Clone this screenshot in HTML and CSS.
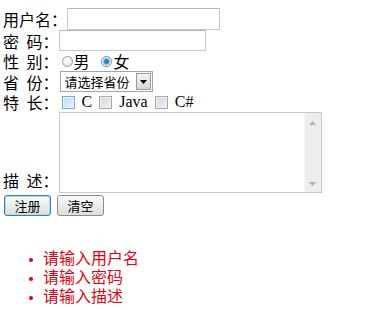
FILE: index.html
```html
<!DOCTYPE html>
<html>
<head>
<meta charset="utf-8">
<link rel="stylesheet" href="styles.css">
</head>
<body>
<form class="form">
  <div class="row r1"><span class="lbl">用户名：</span><input class="txt t1" type="text"></div>
  <div class="row r2"><span class="lbl">密 码：</span><input class="txt t2" type="password"></div>
  <div class="row r3"><span class="lbl">性 别：</span>
    <span class="radio"></span><span class="opt">男</span>
    <span class="radio on"></span><span class="opt">女</span>
  </div>
  <div class="row r4"><span class="lbl">省 份：</span>
    <div class="sel"><span class="sel-text">请选择省份</span><span class="sel-btn"><svg width="7" height="4" viewBox="0 0 7 4"><path d="M0 0H7L3.5 4Z" fill="#000"/></svg></span></div>
  </div>
  <div class="row r5"><span class="lbl">特 长：</span>
    <span class="cb hot"></span><span class="copt">C</span>
    <span class="cb"></span><span class="copt">Java</span>
    <span class="cb"></span><span class="copt">C#</span>
  </div>
  <div class="row r6"><span class="lbl lbl-area">描 述：</span>
    <div class="area"><textarea class="ta"></textarea>
      <div class="sb"><svg width="7" height="4" viewBox="0 0 7 4"><path d="M0 4H7L3.5 0Z" fill="#b0b0b0"/></svg><svg width="7" height="4" viewBox="0 0 7 4"><path d="M0 0H7L3.5 4Z" fill="#b0b0b0"/></svg></div>
    </div>
  </div>
  <div class="row r7"><button type="button" class="btn primary">注册</button><button type="button" class="btn">清空</button></div>
</form>
<ul class="errors">
  <li>请输入用户名</li>
  <li>请输入密码</li>
  <li>请输入描述</li>
</ul>
</body>
</html>
```
FILE: styles.css
```css
html, body { margin: 0; padding: 0; background: #fff; }
body {
  padding: 8px 0 0 3px;
  font-family: "Noto Sans CJK SC", "Liberation Serif", serif;
  font-size: 16px;
  color: #000;
}
.form { display: flex; flex-direction: column; }
.row { display: flex; align-items: center; }
.lbl { white-space: pre; word-spacing: 4px; line-height: 18px; }
.r1 { height: 22px; }
.r2 { height: 21px; }
.r3 { height: 20px; }
.r4 { height: 21px; }
.r5 { height: 20px; }
.r6 { align-items: flex-end; }
.lbl-area { margin-bottom: 4px; }
.r7 { margin-top: 2px; gap: 6px; padding-left: 1px; }

.txt {
  box-sizing: border-box;
  border: 1px solid #c9c9c9;
  border-top-color: #b8b8b8;
  height: 22px;
  padding: 0;
  margin: 0;
  background: #fff;
  outline: none;
}
.t1 { width: 153px; }
.t2 { width: 147px; height: 21px; }

.radio {
  box-sizing: border-box;
  width: 11px; height: 11px;
  border-radius: 50%;
  border: 1px solid #9a9a9a;
  background: radial-gradient(circle at 40% 35%, #fff, #dcdcdc);
  margin-left: 3px;
  margin-right: 1px;
}
.radio.on {
  margin-left: 11px;
  margin-right: 2px;
  border-color: #6f8cab;
  background: radial-gradient(circle, #1e6fae 0, #3f9ad8 2.5px, #cfe3f3 3.5px, #fff 5px);
}
.opt { line-height: 18px; }

.sel {
  display: flex;
  box-sizing: border-box;
  height: 21px;
  width: 93px;
  margin-left: 1px;
  border: 1px solid #a5a5a5;
  background: #fff;
  align-items: center;
  padding: 1px;
}
.sel-text { font-size: 13px; line-height: 17px; padding-left: 3px; flex: 1; white-space: nowrap; }
.sel-btn {
  box-sizing: border-box;
  width: 15px; height: 17px;
  border: 1px solid #9a9a9a;
  background: linear-gradient(#f4f4f4, #d6d6d6);
  display: flex; align-items: center; justify-content: center;
}

.cb {
  box-sizing: border-box;
  width: 13px; height: 13px;
  border: 1px solid #a9a9a9;
  background: linear-gradient(135deg, #d4d4d4, #f4f4f4);
  box-shadow: inset 0 0 0 1px #f0f0f0;
  margin-left: 7px;
}
.cb.hot { margin-left: 3px; border-color: #7aa7d6; background: linear-gradient(135deg, #bcdcf6, #e6f2fc); box-shadow: inset 0 0 0 1px #eaf4fd; }
.copt { font-family: "Liberation Serif", serif; margin-left: 7px; line-height: 18px; }

.area {
  display: flex;
  box-sizing: border-box;
  width: 263px; height: 81px;
  border: 1px solid #c9c9c9;
  background: #fff;
}
.ta { flex: 1; border: 0; resize: none; outline: none; margin: 0; padding: 0; overflow: hidden; }
.sb {
  width: 16px;
  background: #ededed;
  border-left: 1px solid #f7f7f7;
  display: flex; flex-direction: column; justify-content: space-between; align-items: center;
  padding: 8px 0 6px;
}

.btn {
  box-sizing: border-box;
  height: 21px;
  width: 47px;
  padding: 0;
  font-family: "Noto Sans CJK SC", sans-serif;
  font-size: 13px;
  border: 1px solid #8c8c8c;
  border-radius: 3px;
  background: linear-gradient(#fbfbfb, #ececec 50%, #dedede);
  color: #000;
}
.btn.primary { border-color: #3c7fb1; box-shadow: inset 0 0 0 1px #a8dcf5; }

.errors {
  margin: 32px 0 0 0;
  padding-left: 40px;
  color: #e60012;
  line-height: 19px;
  font-size: 16px;
  list-style: none;
}
.errors li::before {
  content: "";
  display: inline-block;
  width: 4px; height: 4px;
  border-radius: 50%;
  background: #e60012;
  margin-left: -14px;
  margin-right: 10px;
  vertical-align: middle;
}
```
